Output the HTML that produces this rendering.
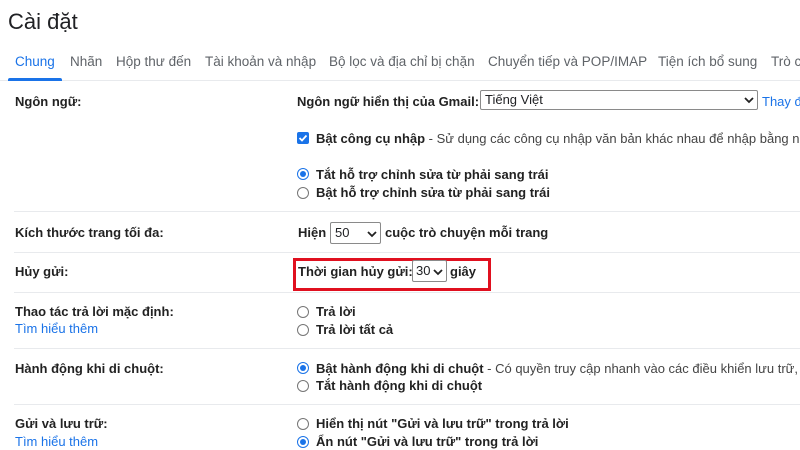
<!DOCTYPE html>
<html><head><meta charset="utf-8">
<style>
*{margin:0;padding:0;box-sizing:border-box}
body{width:800px;height:450px;overflow:hidden;background:#fff;font-family:"Liberation Sans",Arial,sans-serif;color:#202124;position:relative;font-size:13px}
.a{position:absolute;white-space:nowrap}
.b{font-weight:bold;color:#222}
.title{left:8px;top:9px;font-size:22px;color:#202124}
.tab{top:54px;font-size:13.5px;color:#5f6368}
.line{position:absolute;left:14px;right:0;height:1px;background:#e8eaed}
.link{color:#1a73e8}
.sel{position:absolute;border:1px solid #8a8a8a;border-radius:2px;background:#fff;font-size:13px;padding:1px 4px;height:20px;line-height:16px}
.sel svg{position:absolute;right:3px;top:6px}
.rad{position:absolute;width:12px;height:12px;border:1px solid #767676;border-radius:50%;background:#fff}
.rad.on{border:1.5px solid #1a73e8}
.rad.on::after{content:"";position:absolute;left:1.5px;top:1.5px;width:6px;height:6px;border-radius:50%;background:#1a73e8}
.lbl{font-size:13px}
</style></head><body>
<div class="a title">Cài đặt</div>
<div class="a tab" style="left:15px;color:#1a73e8">Chung</div>
<div class="a tab" style="left:70px">Nhãn</div>
<div class="a tab" style="left:116px">Hộp thư đến</div>
<div class="a tab" style="left:205px">Tài khoản và nhập</div>
<div class="a tab" style="left:329px">Bộ lọc và địa chỉ bị chặn</div>
<div class="a tab" style="left:488px">Chuyển tiếp và POP/IMAP</div>
<div class="a tab" style="left:658px">Tiện ích bổ sung</div>
<div class="a tab" style="left:771px">Trò c</div>
<div style="position:absolute;left:0;right:0;top:80px;height:1px;background:#e8eaed"></div>
<div style="position:absolute;left:8px;width:54px;top:78px;height:3px;background:#1a73e8;border-radius:2px 2px 0 0"></div>

<div class="a b lbl" style="left:15px;top:94px">Ngôn ngữ:</div>
<div class="a b lbl" style="left:297px;top:94px">Ngôn ngữ hiển thị của Gmail:</div>
<div class="sel" style="left:480px;top:90px;width:278px">Tiếng Việt<svg width="10" height="7" viewBox="0 0 10 7"><path d="M1 1l4 4 4-4" fill="none" stroke="#222" stroke-width="1.8"/></svg></div>
<div class="a link lbl" style="left:762px;top:94px">Thay đ</div>

<div style="position:absolute;left:297px;top:132px;width:12px;height:12px;background:#1a73e8;border-radius:2px"><svg width="12" height="12" viewBox="0 0 12 12" style="position:absolute;left:0;top:0"><path d="M2.5 6l2.5 2.5 4.5-5" fill="none" stroke="#fff" stroke-width="1.8"/></svg></div>
<div class="a lbl" style="left:316px;top:131px"><b class="b">Bật công cụ nhập</b><span style="color:#444"> - Sử dụng các công cụ nhập văn bản khác nhau để nhập bằng ng</span></div>

<div class="rad on" style="left:297px;top:168px"></div>
<div class="a b lbl" style="left:316px;top:167px">Tắt hỗ trợ chỉnh sửa từ phải sang trái</div>
<div class="rad" style="left:297px;top:187px"></div>
<div class="a b lbl" style="left:316px;top:185px">Bật hỗ trợ chỉnh sửa từ phải sang trái</div>

<div class="line" style="top:211px"></div>
<div class="a b lbl" style="left:15px;top:225px">Kích thước trang tối đa:</div>
<div class="a b lbl" style="left:298px;top:225px">Hiện</div>
<div class="sel" style="left:330px;top:222px;width:51px;height:22px;line-height:18px">50<svg width="10" height="7" viewBox="0 0 10 7" style="top:8px"><path d="M1 1l4 4 4-4" fill="none" stroke="#222" stroke-width="1.8"/></svg></div>
<div class="a b lbl" style="left:385px;top:225px">cuộc trò chuyện mỗi trang</div>

<div class="line" style="top:252px"></div>
<div class="a b lbl" style="left:15px;top:264px">Hủy gửi:</div>
<div style="position:absolute;left:293px;top:258px;width:198px;height:33px;border:3px solid #e0101f"></div>
<div class="a b lbl" style="left:298px;top:264px">Thời gian hủy gửi:</div>
<div class="sel" style="left:412px;top:260px;width:35px;height:22px;line-height:18px;padding-left:3px">30<svg width="10" height="7" viewBox="0 0 10 7" style="top:8px"><path d="M1 1l4 4 4-4" fill="none" stroke="#222" stroke-width="1.8"/></svg></div>
<div class="a b lbl" style="left:450px;top:264px">giây</div>

<div class="line" style="top:292px"></div>
<div class="a b lbl" style="left:15px;top:304px">Thao tác trả lời mặc định:</div>
<div class="a link lbl" style="left:15px;top:321px">Tìm hiểu thêm</div>
<div class="rad" style="left:297px;top:306px"></div>
<div class="a b lbl" style="left:316px;top:304px">Trả lời</div>
<div class="rad" style="left:297px;top:324px"></div>
<div class="a b lbl" style="left:316px;top:322px">Trả lời tất cả</div>

<div class="line" style="top:348px"></div>
<div class="a b lbl" style="left:15px;top:361px">Hành động khi di chuột:</div>
<div class="rad on" style="left:297px;top:362px"></div>
<div class="a lbl" style="left:316px;top:361px"><b class="b">Bật hành động khi di chuột</b><span style="color:#444"> - Có quyền truy cập nhanh vào các điều khiển lưu trữ,</span></div>
<div class="rad" style="left:297px;top:380px"></div>
<div class="a b lbl" style="left:316px;top:378px">Tắt hành động khi di chuột</div>

<div class="line" style="top:404px"></div>
<div class="a b lbl" style="left:15px;top:416px">Gửi và lưu trữ:</div>
<div class="a link lbl" style="left:15px;top:434px">Tìm hiểu thêm</div>
<div class="rad" style="left:297px;top:418px"></div>
<div class="a b lbl" style="left:316px;top:416px">Hiển thị nút "Gửi và lưu trữ" trong trả lời</div>
<div class="rad on" style="left:297px;top:436px"></div>
<div class="a b lbl" style="left:316px;top:434px">Ẩn nút "Gửi và lưu trữ" trong trả lời</div>
</body></html>
